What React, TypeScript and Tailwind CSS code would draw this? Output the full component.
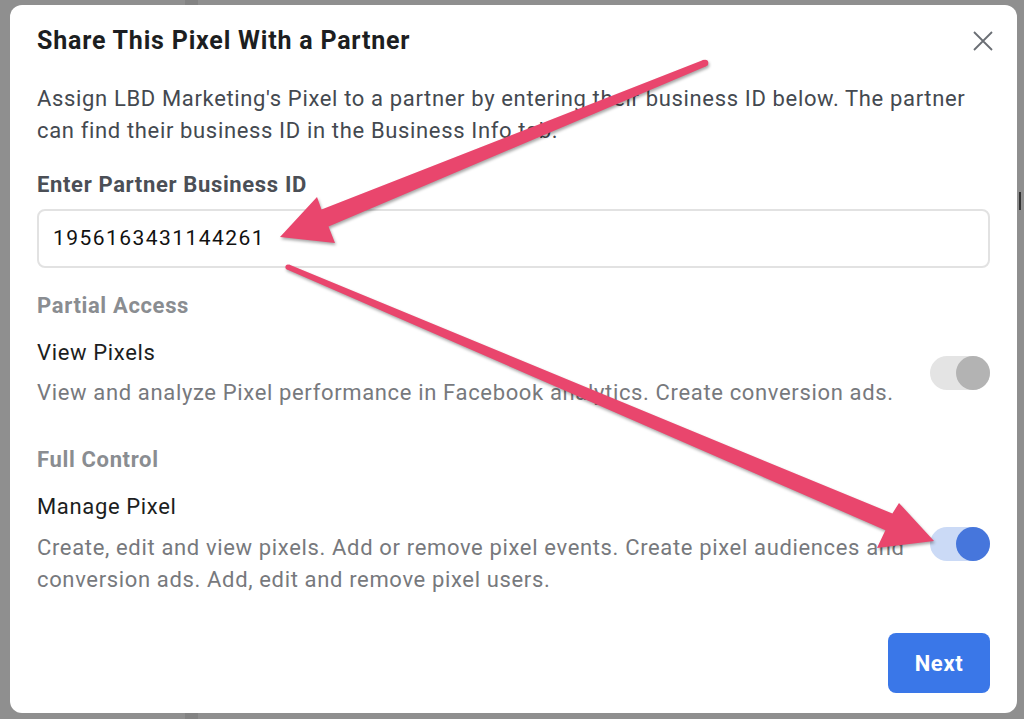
import React from "react";

function Toggle({ on }: { on: boolean }) {
  return (
    <div
      className={
        on
          ? "flex h-[34px] w-[60px] shrink-0 justify-end rounded-full bg-[#cbdaf6]"
          : "flex h-[34px] w-[60px] shrink-0 justify-end rounded-full bg-[#e4e4e4]"
      }
    >
      <div
        className={
          on
            ? "h-[34px] w-[34px] rounded-full bg-[#4676dc]"
            : "h-[34px] w-[34px] rounded-full bg-[#b3b3b3]"
        }
      />
    </div>
  );
}

function Arrows() {
  return (
    <svg
      className="pointer-events-none absolute left-0 top-0 drop-shadow-[1px_2px_1.5px_rgba(0,0,0,0.35)]"
      width="1024"
      height="719"
      viewBox="0 0 1024 719"
    >
      <polygon
        fill="#e9466d"
        points="280,237 335,243 328.5,226.4 706.2,66.3 703.8,59.7 321.5,209.6 317,197"
      />
      <circle cx="705" cy="63" r="3.3" fill="#e9466d" />
      <polygon
        fill="#e9466d"
        points="934,541 899,503 892.4,513.6 289,264.5 287,269.5 885.4,530.2 877,548"
      />
      <circle cx="288" cy="267" r="2.6" fill="#e9466d" />
    </svg>
  );
}

export default function App() {
  return (
    <div className="relative h-[719px] w-[1024px] overflow-hidden bg-[#8f8f8f] pl-[10px] pt-[5px] font-['Roboto',sans-serif]">
      <div className="absolute left-[185px] top-0 h-[719px] w-[13px] bg-[#838383]" />
      <div className="absolute left-[1019px] top-[192px] h-[18px] w-[2px] bg-[#333]" />
      <div className="relative flex h-[708px] w-[1007px] flex-col rounded-[12px] bg-white px-[27px] pt-[22px]">
        <div className="flex h-[28px] items-center justify-between">
          <h1 className="text-[25px] font-bold leading-[28px] tracking-[0.8px] text-[#1c1e21]">
            Share This Pixel With a Partner
          </h1>
          <svg width="20" height="20" viewBox="0 0 20 20" className="-mr-[3px]">
            <path d="M1 1 L19 19 M19 1 L1 19" stroke="#6a6e74" strokeWidth="1.8" />
          </svg>
        </div>

        <p className="mt-[28px] whitespace-nowrap text-[22px] leading-[32px] tracking-[0.65px] text-[#444950]">
          Assign LBD Marketing's Pixel to a partner by entering their business ID below. The partner
          <br />
          can find their business ID in the Business Info tab.
        </p>

        <div className="mt-[24px] text-[22px] font-bold leading-[28px] tracking-[0.65px] text-[#4b4f56]">
          Enter Partner Business ID
        </div>
        <div className="mt-[10px] flex h-[59px] items-center rounded-[8px] border-2 border-[#e2e2e2] px-[14px] text-[21px] tracking-[1.45px] text-[#111]">
          1956163431144261
        </div>

        <div className="mt-[24px] text-[22px] font-bold leading-[28px] tracking-[0.65px] text-[#8a8d91]">
          Partial Access
        </div>
        <div className="mt-[17px] flex items-center justify-between">
          <div className="tracking-[0.65px]">
            <div className="text-[22px] leading-[32px] text-[#1c1e21]">View Pixels</div>
            <div className="mt-[8px] whitespace-nowrap text-[22px] leading-[32px] text-[#77797d]">
              View and analyze Pixel performance in Facebook analytics. Create conversion ads.
            </div>
          </div>
          <Toggle on={false} />
        </div>

        <div className="mt-[37px] text-[22px] font-bold leading-[28px] tracking-[0.65px] text-[#8a8d91]">
          Full Control
        </div>
        <div className="mt-[17px] flex items-center justify-between">
          <div className="tracking-[0.65px]">
            <div className="text-[22px] leading-[32px] text-[#1c1e21]">Manage Pixel</div>
            <div className="mt-[9px] whitespace-nowrap text-[22px] leading-[32px] text-[#77797d]">
              Create, edit and view pixels. Add or remove pixel events. Create pixel audiences and
              <br />
              conversion ads. Add, edit and remove pixel users.
            </div>
          </div>
          <Toggle on={true} />
        </div>

        <div className="mt-[37px] flex justify-end">
          <button className="h-[60px] w-[102px] rounded-[8px] bg-[#3a77e8] text-[22px] font-bold tracking-[0.65px] text-white">
            Next
          </button>
        </div>
      </div>
      <Arrows />
    </div>
  );
}
